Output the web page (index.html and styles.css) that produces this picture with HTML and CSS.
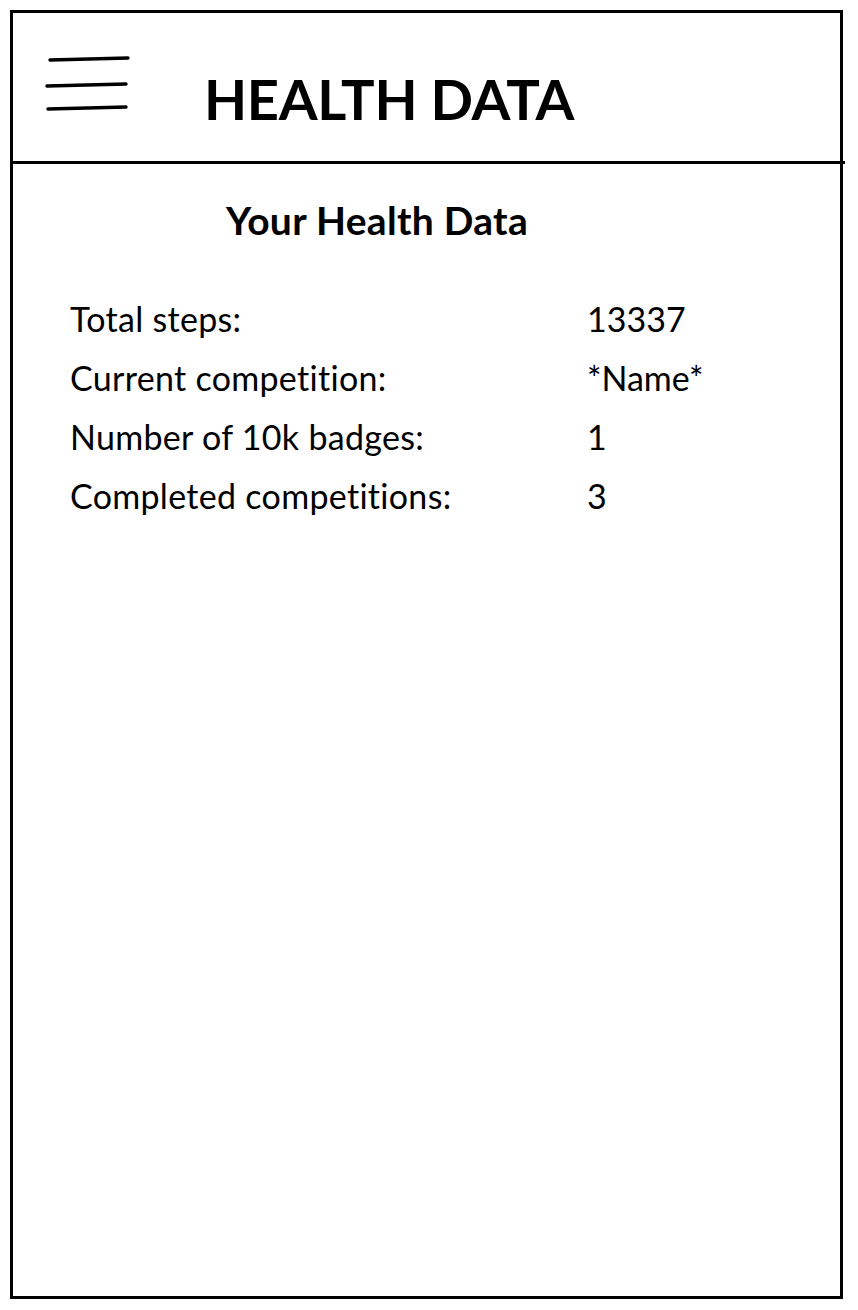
FILE: index.html
```html
<!DOCTYPE html>
<html lang="en">
<head>
<meta charset="utf-8">
<title>Health Data</title>
<link rel="stylesheet" href="styles.css">
</head>
<body>
<div class="frame">
  <header class="header">
    <svg class="menu" width="90" height="64" viewBox="0 0 90 64" aria-hidden="true">
      <path d="M5 6 L83 4" />
      <path d="M2 32 L81 30" />
      <path d="M3 55 L81 53" />
    </svg>
    <h1 class="title">HEALTH DATA</h1>
  </header>
  <main class="content">
    <h2 class="subtitle">Your Health Data</h2>
    <dl class="stats">
      <div class="row"><dt>Total steps:</dt><dd>13337</dd></div>
      <div class="row"><dt>Current competition:</dt><dd>*Name*</dd></div>
      <div class="row"><dt>Number of 10k badges:</dt><dd>1</dd></div>
      <div class="row"><dt>Completed competitions:</dt><dd>3</dd></div>
    </dl>
  </main>
</div>
</body>
</html>
```

FILE: styles.css
```css
* { box-sizing: border-box; }
html, body { margin: 0; padding: 0; background: #fff; }
body {
  font-family: Lato, "Open Sans", "Liberation Sans", sans-serif;
  font-variant-ligatures: none;
  color: #000;
  width: 858px;
  height: 1310px;
}
.frame {
  margin: 10px 0 0 10px;
  width: 833px;
  height: 1289px;
  border: 3px solid #000;
  display: flex;
  flex-direction: column;
}
.header {
  flex: none;
  height: 151px;
  border-bottom: 3px solid #000;
  display: flex;
  align-items: flex-start;
  padding-left: 32px;
  margin-right: -5px;
}
.menu {
  flex: none;
  margin-top: 41px;
}
.menu path {
  stroke: #000;
  stroke-width: 3.4;
  stroke-linecap: round;
  fill: none;
}
.title {
  margin: 58px 0 0 69px;
  font-size: 56px;
  font-weight: 700;
  line-height: 1;
  letter-spacing: -0.3px;
}
.content {
  flex: 1;
  padding-top: 37px;
}
.subtitle {
  margin: 0 0 0 213px;
  font-size: 39px;
  font-weight: 700;
  line-height: 1;
  letter-spacing: 0.3px;
}
.stats {
  margin: 50px 0 0 57px;
  padding: 0;
}
.row {
  display: grid;
  grid-template-columns: 517px auto;
  height: 58.8px;
  align-items: center;
  font-size: 34px;
  line-height: 1;
  letter-spacing: 0.3px;
}
.row dt, .row dd { margin: 0; }
.row dd { letter-spacing: 0; }
```
